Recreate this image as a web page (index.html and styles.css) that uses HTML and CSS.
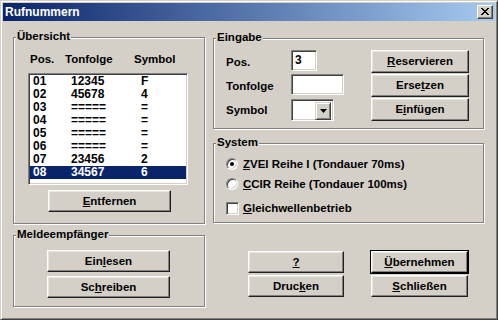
FILE: index.html
```html
<!DOCTYPE html>
<html lang="de">
<head>
<meta charset="utf-8">
<title>Rufnummern</title>
<link rel="stylesheet" href="styles.css">
</head>
<body>
<div class="window">
  <div class="titlebar">
    <span class="title">Rufnummern</span>
    <span class="close"><svg width="8" height="7" viewBox="0 0 8 7"><path d="M0 0h2v1h1v1h2v-1h1v-1h2v1h-1v1h-1v1h-1v1h1v1h1v1h1v1h-2v-1h-1v-1h-2v1h-1v1h-2v-1h1v-1h1v-1h1v-1h-1v-1h-1v-1h-1z" fill="#000"/></svg></span>
  </div>
  <div class="content">
    <div class="col col-left">
      <div class="group g-uebersicht">
        <span class="legend">Übersicht</span>
        <div class="list-head"><span>Pos.</span><span>Tonfolge</span><span>Symbol</span></div>
        <div class="listbox">
          <div class="row"><span>01</span><span>12345</span><span>F</span></div>
          <div class="row"><span>02</span><span>45678</span><span>4</span></div>
          <div class="row"><span>03</span><span>=====</span><span>=</span></div>
          <div class="row"><span>04</span><span>=====</span><span>=</span></div>
          <div class="row"><span>05</span><span>=====</span><span>=</span></div>
          <div class="row"><span>06</span><span>=====</span><span>=</span></div>
          <div class="row"><span>07</span><span>23456</span><span>2</span></div>
          <div class="row sel"><span>08</span><span>34567</span><span>6</span></div>
        </div>
        <div class="btn btn-wide"><span><u>E</u>ntfernen</span></div>
      </div>
      <div class="group g-melde">
        <span class="legend">Meldeempfänger</span>
        <div class="btn btn-wide"><span>Ein<u>l</u>esen</span></div>
        <div class="btn btn-wide"><span>Sc<u>h</u>reiben</span></div>
      </div>
    </div>
    <div class="col col-right">
      <div class="group g-eingabe">
        <span class="legend">Eingabe</span>
        <span class="lbl">Pos.</span>
        <div class="field f-pos">3</div>
        <div class="btn btn-side"><span><u>R</u>eservieren</span></div>
        <span class="lbl">Tonfolge</span>
        <div class="field f-ton"></div>
        <div class="btn btn-side"><span>Erse<u>t</u>zen</span></div>
        <span class="lbl">Symbol</span>
        <div class="field combo"><span class="combo-text"></span><span class="combo-btn"><svg width="7" height="4" viewBox="0 0 7 4"><path d="M0 0h7L3.5 4z" fill="#000"/></svg></span></div>
        <div class="btn btn-side"><span>E<u>i</u>nfügen</span></div>
      </div>
      <div class="group g-system">
        <span class="legend">System</span>
        <div class="opt"><span class="radio on"></span><span><u>Z</u>VEI Reihe I (Tondauer 70ms)</span></div>
        <div class="opt"><span class="radio"></span><span><u>C</u>CIR Reihe (Tondauer 100ms)</span></div>
        <div class="opt opt-check"><span class="check"></span><span><u>G</u>leichwellenbetrieb</span></div>
      </div>
      <div class="bottom-buttons">
        <div class="btn"><span><u>?</u></span></div>
        <div class="btn btn-default"><span><u>Ü</u>bernehmen</span></div>
        <div class="btn"><span>Druc<u>k</u>en</span></div>
        <div class="btn"><span><u>S</u>chließen</span></div>
      </div>
    </div>
  </div>
</div>
</body>
</html>
```

FILE: styles.css
```css
* { box-sizing: border-box; }

html, body {
  margin: 0;
  padding: 0;
  background: #d4d0c8;
}

body {
  font-family: "Liberation Sans", Arial, sans-serif;
  font-weight: bold;
  font-size: 11.5px;
  line-height: 13px;
  color: #000;
}

.window {
  width: 498px;
  height: 320px;
  background: #d4d0c8;
  border: 1px solid;
  border-color: #d4d0c8 #404040 #404040 #d4d0c8;
  box-shadow: inset 1px 1px 0 #fff, inset -1px -1px 0 #808080;
  padding: 2px;
  display: flex;
  flex-direction: column;
}

.titlebar {
  height: 18px;
  background: linear-gradient(to right, #0a246a, #a6caf0);
  display: flex;
  align-items: center;
  justify-content: space-between;
  padding: 0 2px 0 2px;
}

.title {
  color: #fff;
  font-size: 12px;
  line-height: 18px;
}

.close {
  width: 16px;
  height: 14px;
  background: #d4d0c8;
  border: 1px solid;
  border-color: #fff #404040 #404040 #fff;
  box-shadow: inset -1px -1px 0 #808080;
  display: flex;
  align-items: center;
  justify-content: center;
  padding: 0 1px 1px 0;
}

.close svg { display: block; }

.content {
  display: grid;
  grid-template-columns: 192px 271px;
  column-gap: 8px;
  padding: 16px 0 0 10px;
}

.col {
  display: flex;
  flex-direction: column;
}

.col-right { padding-top: 1px; }

.group {
  position: relative;
  border: 1px solid #808080;
  box-shadow: inset 1px 1px 0 #fff, 1px 1px 0 #fff;
}

.legend {
  position: absolute;
  top: -8px;
  left: 2px;
  padding: 0 1px;
  background: #d4d0c8;
  line-height: 13px;
}

/* Übersicht */
.g-uebersicht {
  height: 187px;
  padding: 15px 0 0 14px;
  display: flex;
  flex-direction: column;
}

.list-head {
  display: grid;
  grid-template-columns: 35px 69px auto;
  padding-left: 2px;
  height: 13px;
  margin-bottom: 7px;
}

.listbox {
  width: 160px;
  height: 112px;
  background: #fff;
  border: 1px solid;
  border-color: #808080 #fff #fff #808080;
  box-shadow: inset 1px 1px 0 #404040, inset -1px -1px 0 #d4d0c8;
  padding: 1px 1px;
}

.row {
  display: grid;
  grid-template-columns: 38px 70px auto;
  height: 13px;
  padding-left: 3px;
  font-size: 12px;
  line-height: 13px;
}

.row.sel {
  background: #0a246a;
  color: #fff;
}

.btn {
  height: 22px;
  background: #d4d0c8;
  border: 1px solid;
  border-color: #fff #202020 #202020 #fff;
  box-shadow: inset -1px -1px 0 #808080, inset 1px 1px 0 #e8e6e0;
  display: flex;
  align-items: center;
  justify-content: center;
  line-height: 13px;
}

.btn-wide {
  width: 123px;
  margin-left: 20px;
}

.g-uebersicht .btn-wide { margin-top: 5px; }

/* Meldeempfänger */
.g-melde {
  margin-top: 11px;
  height: 72px;
  padding-top: 14px;
  display: flex;
  flex-direction: column;
  gap: 4px;
}

.g-melde .btn-wide { margin-left: 33px; }

/* Eingabe */
.g-eingabe {
  height: 91px;
  padding: 11px 0 0 12px;
  display: grid;
  grid-template-columns: 65px 80px 98px;
  grid-template-rows: 24px 24px 24px;
  align-items: start;
}

.lbl {
  align-self: center;
}

.field {
  background: #fff;
  border: 1px solid;
  border-color: #808080 #fff #fff #808080;
  box-shadow: inset 1px 1px 0 #404040, inset -1px -1px 0 #d4d0c8;
  height: 21px;
  padding: 2px 0 0 3px;
  line-height: 15px;
  font-size: 12px;
}

.f-pos { width: 26px; }
.f-ton { width: 53px; }

.combo {
  width: 43px;
  height: 22px;
  margin-top: 1px;
  padding: 2px;
  display: flex;
  justify-content: flex-end;
}

.combo-btn {
  width: 16px;
  height: 18px;
  background: #d4d0c8;
  border: 1px solid;
  border-color: #d4d0c8 #404040 #404040 #d4d0c8;
  box-shadow: inset 1px 1px 0 #fff, inset -1px -1px 0 #808080;
  display: flex;
  align-items: center;
  justify-content: center;
}

.combo-btn svg { display: block; }

.btn-side { height: 23px; }

/* System */
.g-system {
  margin-top: 14px;
  height: 80px;
  padding: 10px 0 0 12px;
  display: flex;
  flex-direction: column;
}

.opt {
  height: 20px;
  display: flex;
  align-items: center;
  gap: 5px;
}

.opt-check {
  margin-top: 4px;
  gap: 4px;
}

.radio {
  width: 12px;
  height: 12px;
  border-radius: 50%;
  background: #fff;
  border: 1px solid;
  border-color: #808080 #fff #fff #808080;
  box-shadow: inset 1px 1px 0 #404040, inset -1px -1px 0 #d4d0c8;
  display: flex;
  align-items: center;
  justify-content: center;
}

.radio.on::after {
  content: "";
  width: 4px;
  height: 4px;
  border-radius: 50%;
  background: #000;
}

.check {
  width: 13px;
  height: 13px;
  background: #fff;
  border: 1px solid;
  border-color: #808080 #fff #fff #808080;
  box-shadow: inset 1px 1px 0 #404040, inset -1px -1px 0 #d4d0c8;
}

/* Bottom buttons */
.bottom-buttons {
  margin: 28px 0 0 35px;
  display: grid;
  grid-template-columns: 96px 97px;
  column-gap: 27px;
  row-gap: 2px;
}

.btn-default {
  outline: 1px solid #000;
  outline-offset: 0;
  border-color: #fff #000 #000 #fff;
}
```
